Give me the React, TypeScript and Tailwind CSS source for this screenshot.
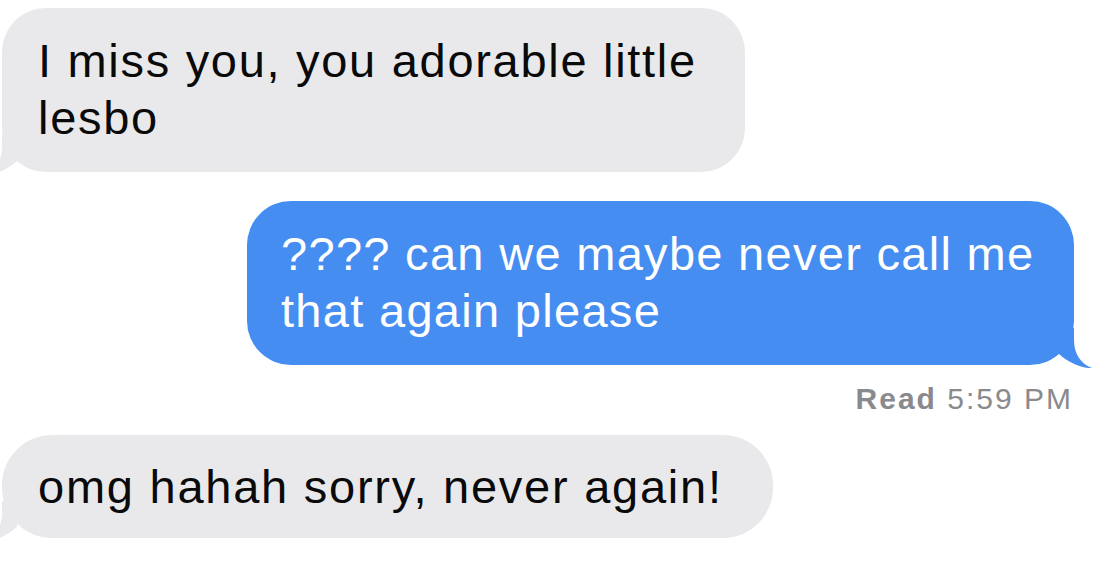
import React from "react";

const GRAY = "#e9e9eb";
const BLUE = "#468df1";

function Tail({ color, side }: { color: string; side: "left" | "right" }) {
  return (
    <svg
      width="53"
      height="40"
      viewBox="0 0 53 40"
      className={
        side === "right"
          ? "absolute right-[-18px] bottom-[-3px]"
          : "absolute left-[-18px] bottom-[-3px] -scale-x-100"
      }
    >
      <path
        d="M35 0 L35 12 C35 26 42 36 53 40 C45 40.5 31 36 20 26 L20 0 Z"
        fill={color}
      />
    </svg>
  );
}

export default function App() {
  const font = { fontFamily: '"Liberation Sans", Arial, Helvetica, sans-serif' };
  return (
    <div
      className="w-[1104px] h-[564px] overflow-hidden bg-white flex flex-col"
      style={font}
    >
      <div className="relative ml-[2px] mt-[8px] w-[743px] rounded-[44px] bg-[#e9e9eb] pl-[36px] pt-[24px] pb-[26px] text-[47px] leading-[57px] tracking-[1.7px] text-[#0a0a0a] whitespace-nowrap">
        I miss you, you adorable little
        <br />
        lesbo
        <Tail color={GRAY} side="left" />
      </div>

      <div className="relative self-end mr-[30px] mt-[29px] w-[827px] rounded-[44px] bg-[#468df1] pl-[34px] pt-[24px] pb-[26px] text-[47px] leading-[57px] tracking-[1.3px] text-white whitespace-nowrap">
        ???? can we maybe never call me
        <br />
        that again please
        <Tail color={BLUE} side="right" />
      </div>

      <div className="self-end mr-[31px] mt-[17px] text-[30px] leading-[34px] text-[#8a8a8e] tracking-[2px] whitespace-nowrap">
        <span className="font-semibold">Read</span> 5:59 PM
      </div>

      <div className="relative ml-[2px] mt-[19px] w-[771px] rounded-[50px] bg-[#e9e9eb] pl-[36px] pt-[23px] pb-[23px] text-[47px] leading-[57px] tracking-[1.75px] text-[#0a0a0a] whitespace-nowrap">
        omg hahah sorry, never again!
        <Tail color={GRAY} side="left" />
      </div>
    </div>
  );
}
